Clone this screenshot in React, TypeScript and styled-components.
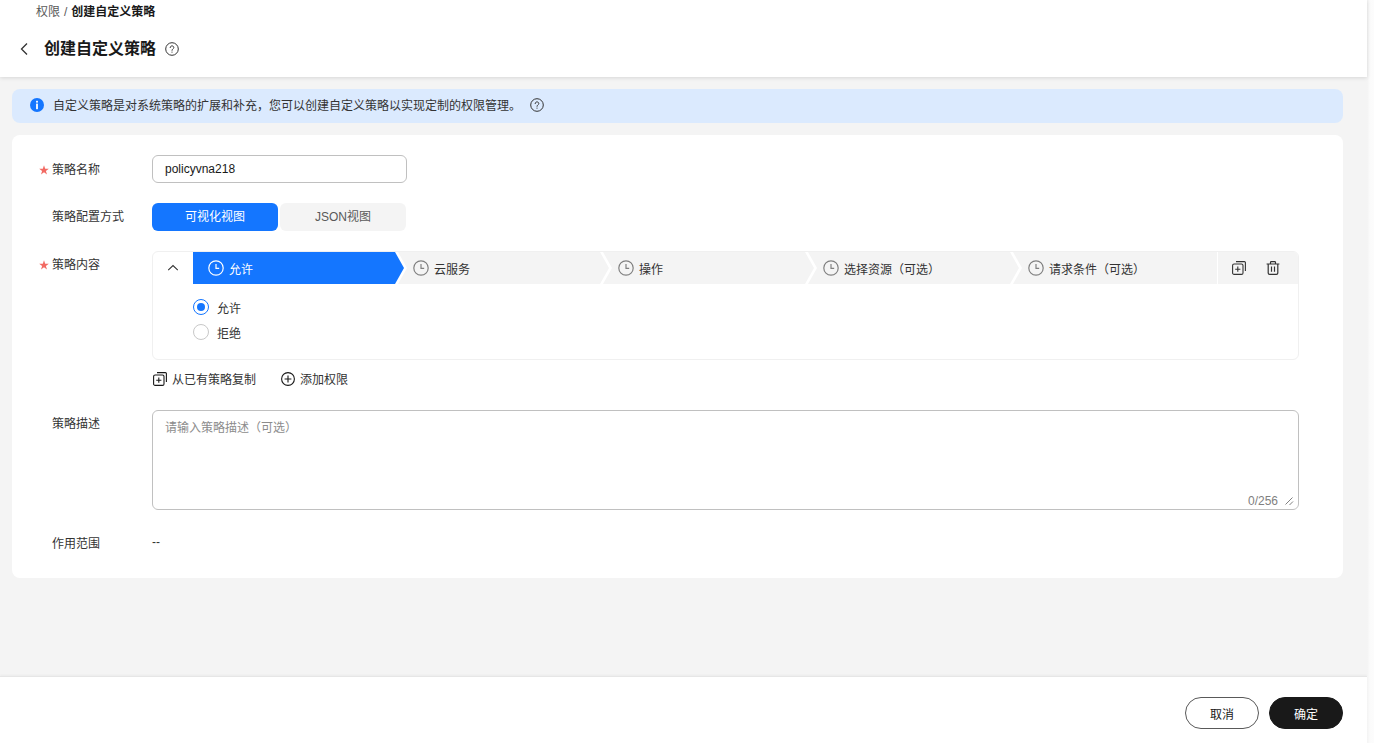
import React from "react";
import styled, { createGlobalStyle } from "styled-components";

const Global = createGlobalStyle`
  html, body { margin: 0; padding: 0; background: #fff; }
  body { font-family: "Liberation Sans", "Noto Sans CJK SC", sans-serif; font-size: 12px; color: #191919; }
  * { box-sizing: border-box; }
`;

const Shell = styled.div`
  display: flex;
  width: 1374px;
  height: 743px;
  overflow: hidden;
`;
const Main = styled.div`
  width: 1367px;
  display: flex;
  flex-direction: column;
  background: #f4f4f4;
`;
const Rail = styled.div`
  width: 7px;
  background: linear-gradient(to right, #f3f3f3 0, #fbfbfb 3px, #fcfcfc 100%);
`;
const Header = styled.header`
  height: 77px;
  background: #fff;
  box-shadow: 0 1px 4px rgba(0, 0, 0, 0.12);
  padding: 4px 0 0 18px;
  position: relative;
`;
const Crumbs = styled.div`
  display: flex;
  gap: 4px;
  height: 16px;
  line-height: 16px;
  padding-left: 18px;
  color: #595959;
`;
const CrumbNow = styled.span`
  color: #191919;
  font-weight: 700;
`;
const TitleRow = styled.div`
  display: flex;
  align-items: center;
  margin-top: 17px;
  height: 24px;
`;
const BackButton = styled.span`
  display: flex;
  width: 26px;
  color: #333;
`;
const Title = styled.h1`
  margin: 0 9px 0 0;
  font-size: 16px;
  font-weight: 700;
  line-height: 24px;
`;
const Content = styled.main`
  flex: 1;
  padding: 12px 24px 0 12px;
`;
const Banner = styled.div`
  display: flex;
  align-items: center;
  height: 34px;
  padding: 0 0 2px 18px;
  background: #dbeafe;
  border-radius: 8px;
  color: #333;
`;
const BannerText = styled.span`
  margin: 0 9px 0 9px;
  padding-top: 2px;
  line-height: 16px;
`;
const Card = styled.section`
  margin-top: 12px;
  height: 443px;
  background: #fff;
  border-radius: 8px;
  padding: 20px 44px 0 0;
`;
const Row = styled.div<{ $mb: number }>`
  display: flex;
  margin-bottom: ${(p) => p.$mb}px;
`;
const Label = styled.label<{ $top: number }>`
  width: 140px;
  flex: none;
  padding: ${(p) => p.$top}px 0 0 28px;
  line-height: 16px;
  color: #333;
  display: flex;
  align-items: flex-start;
`;
const Star = styled.span`
  width: 12px;
  height: 16px;
  flex: none;
  display: flex;
  align-items: center;
  svg { margin-left: -1px; }
`;
const TextInput = styled.div`
  width: 255px;
  height: 28px;
  padding: 0 12px;
  border: 1px solid #c0c0c0;
  border-radius: 6px;
  line-height: 26px;
  color: #191919;
`;
const Segments = styled.div`
  display: flex;
  gap: 2px;
`;
const Segment = styled.div<{ $active?: boolean }>`
  width: 126px;
  height: 28px;
  border-radius: 6px;
  background: ${(p) => (p.$active ? "#1476ff" : "#f4f4f4")};
  color: ${(p) => (p.$active ? "#fff" : "#595959")};
  line-height: 28px;
  text-align: center;
`;
const Field = styled.div`
  flex: 1;
  min-width: 0;
`;
const Policy = styled.div`
  height: 109px;
  border: 1px solid #f0f0f0;
  border-radius: 6px;
  overflow: hidden;
`;
const StepBar = styled.div`
  display: flex;
  height: 32px;
`;
const Collapse = styled.span`
  width: 40px;
  flex: none;
  display: flex;
  align-items: center;
  justify-content: center;
  color: #333;
`;
const Steps = styled.div`
  display: flex;
  width: 1023px;
  flex: none;
`;
const Step = styled.div<{ $active?: boolean; $first?: boolean; $last?: boolean }>`
  flex: none;
  width: ${(p) => (p.$last ? 204 : 211)}px;
  margin-left: ${(p) => (p.$first ? 0 : -6)}px;
  padding-left: 15px;
  height: 32px;
  display: flex;
  align-items: center;
  gap: 5px;
  background: ${(p) => (p.$active ? "#1476ff" : "#f4f4f4")};
  color: ${(p) => (p.$active ? "#fff" : "#333")};
  clip-path: ${(p) =>
    p.$first
      ? "polygon(0 0, calc(100% - 9px) 0, 100% 50%, calc(100% - 9px) 100%, 0 100%)"
      : p.$last
      ? "polygon(0 0, 100% 0, 100% 100%, 0 100%, 9px 50%)"
      : "polygon(0 0, calc(100% - 9px) 0, 100% 50%, calc(100% - 9px) 100%, 0 100%, 9px 50%)"};
  svg { flex: none; color: ${(p) => (p.$active ? "#fff" : "#808080")}; }
`;
const Actions = styled.div`
  flex: 1;
  margin-left: 2px;
  background: #f4f4f4;
  display: flex;
  align-items: center;
  gap: 20px;
  padding-left: 14px;
  color: #333;
`;
const RadioList = styled.div`
  padding: 15px 0 0 40px;
  display: flex;
  flex-direction: column;
  gap: 9px;
`;
const RadioRow = styled.div`
  display: flex;
  align-items: center;
  height: 16px;
  gap: 8px;
  color: #333;
`;
const Radio = styled.span<{ $checked?: boolean }>`
  width: 16px;
  height: 16px;
  border-radius: 50%;
  border: 1px solid ${(p) => (p.$checked ? "#1476ff" : "#c8c8c8")};
  display: flex;
  align-items: center;
  justify-content: center;
  &::after {
    content: "";
    width: 8px;
    height: 8px;
    border-radius: 50%;
    background: ${(p) => (p.$checked ? "#1476ff" : "transparent")};
  }
`;
const LinkRow = styled.div`
  display: flex;
  align-items: center;
  height: 16px;
  margin-top: 11px;
  padding-left: 1px;
  gap: 25px;
  color: #333;
`;
const LinkItem = styled.span`
  display: flex;
  align-items: center;
  gap: 5px;
  svg { color: #191919; flex: none; }
`;
const LinkText = styled.span`
  line-height: 16px;
  padding-top: 2px;
`;
const TextArea = styled.div`
  position: relative;
  height: 100px;
  margin-top: -1px;
  border: 1px solid #c0c0c0;
  border-radius: 6px;
  padding: 9px 12px;
  line-height: 16px;
  color: #8c8c8c;
`;
const Counter = styled.span`
  position: absolute;
  right: 20px;
  bottom: 1px;
  line-height: 14px;
  color: #808080;
`;
const Grip = styled.span`
  position: absolute;
  right: 4px;
  bottom: 3px;
  display: flex;
  color: #808080;
`;
const Plain = styled.div`
  line-height: 16px;
  color: #333;
`;
const Footer = styled.footer`
  height: 67px;
  background: #fff;
  border-top: 1px solid #e6e6e6;
  box-shadow: 0 -1px 2px rgba(0, 0, 0, 0.04);
  display: flex;
  justify-content: flex-end;
  align-items: flex-start;
  gap: 10px;
  padding: 20px 24px 0 0;
`;
const Pill = styled.button<{ $primary?: boolean }>`
  width: 74px;
  height: 32px;
  padding: 0;
  border-radius: 16px;
  border: 1px solid ${(p) => (p.$primary ? "#191919" : "#595959")};
  background: ${(p) => (p.$primary ? "#191919" : "#fff")};
  color: ${(p) => (p.$primary ? "#fff" : "#191919")};
  font: inherit;
`;

const Help = () => (
  <svg width="14" height="14" viewBox="0 0 14 14" fill="none" stroke="#333" strokeWidth="1">
    <circle cx="7" cy="7" r="6.3" />
    <path d="M5.2 5.6c0-1 .8-1.7 1.8-1.7s1.8.7 1.8 1.6c0 1.4-1.8 1.4-1.8 2.8" strokeLinecap="round" />
    <circle cx="7" cy="10.1" r=".6" fill="#333" stroke="none" />
  </svg>
);
const Back = () => (
  <svg width="12" height="14" viewBox="0 0 12 14" fill="none" stroke="currentColor" strokeWidth="1.3">
    <path d="M9 1.5 3.5 7 9 12.5" />
  </svg>
);
const Info = () => (
  <svg width="14" height="14" viewBox="0 0 14 14">
    <circle cx="7" cy="7" r="7" fill="#1476ff" />
    <rect x="6.1" y="2.8" width="1.8" height="1.8" fill="#fff" />
    <rect x="6.1" y="5.6" width="1.8" height="5.6" fill="#fff" />
  </svg>
);
const RequiredStar = () => (
  <svg width="10" height="10" viewBox="0 0 10 10">
    <path d="M5 .3 6.2 3.7H9.8L6.9 5.9 8 9.5 5 7.3 2 9.5 3.1 5.9.2 3.7H3.8Z" fill="#f26a63" />
  </svg>
);
const Clock = () => (
  <svg width="16" height="16" viewBox="0 0 16 16" fill="none" stroke="currentColor" strokeWidth="1.2">
    <circle cx="8" cy="8" r="7.2" />
    <path d="M8 4v4.3h3.2" />
  </svg>
);
const Up = () => (
  <svg width="12" height="12" viewBox="0 0 12 12" fill="none" stroke="currentColor" strokeWidth="1.1">
    <path d="M1.2 8.2 6 3.6l4.8 4.6" />
  </svg>
);
const CopyAdd = () => (
  <svg width="14" height="14" viewBox="0 0 14 14" fill="none" stroke="currentColor" strokeWidth="1.1">
    <rect x=".6" y="3" width="10.4" height="10.4" rx="1.5" />
    <path d="M4 .6h8.4a1 1 0 0 1 1 1V10M5.8 5.6v5.2M3.2 8.2h5.2" />
  </svg>
);
const Trash = () => (
  <svg width="14" height="14" viewBox="0 0 14 14" fill="none" stroke="currentColor" strokeWidth="1.2">
    <path d="M.6 3h12.8M4.5 3V1.4c0-.4.3-.8.8-.8h3.4c.5 0 .8.4.8.8V3M2.2 3v9c0 .8.6 1.4 1.4 1.4h6.8c.8 0 1.4-.6 1.4-1.4V3M5.5 5.5v5.2M8.5 5.5v5.2" />
  </svg>
);
const PlusCircle = () => (
  <svg width="14" height="14" viewBox="0 0 14 14" fill="none" stroke="currentColor" strokeWidth="1.1">
    <circle cx="7" cy="7" r="6.4" />
    <path d="M7 3.6v6.8M3.6 7h6.8" />
  </svg>
);
const Resize = () => (
  <svg width="9" height="9" viewBox="0 0 9 9" fill="none" stroke="currentColor" strokeWidth="1">
    <path d="M.5 7.5 7.5.5M4.5 8 8 4.5" />
  </svg>
);

const stepNames = ["允许", "云服务", "操作", "选择资源（可选）", "请求条件（可选）"];

export default function App() {
  return (
    <Shell>
      <Global />
      <Main>
        <Header>
          <Crumbs>
            <span>权限</span>
            <span>/</span>
            <CrumbNow>创建自定义策略</CrumbNow>
          </Crumbs>
          <TitleRow>
            <BackButton><Back /></BackButton>
            <Title>创建自定义策略</Title>
            <Help />
          </TitleRow>
        </Header>
        <Content>
          <Banner>
            <Info />
            <BannerText>自定义策略是对系统策略的扩展和补充，您可以创建自定义策略以实现定制的权限管理。</BannerText>
            <Help />
          </Banner>
          <Card>
            <Row $mb={20}>
              <Label $top={7}><Star><RequiredStar /></Star>策略名称</Label>
              <TextInput>policyvna218</TextInput>
            </Row>
            <Row $mb={20}>
              <Label $top={6}><Star />策略配置方式</Label>
              <Segments>
                <Segment $active>可视化视图</Segment>
                <Segment>JSON视图</Segment>
              </Segments>
            </Row>
            <Row $mb={24}>
              <Label $top={6}><Star><RequiredStar /></Star>策略内容</Label>
              <Field>
                <Policy>
                  <StepBar>
                    <Collapse><Up /></Collapse>
                    <Steps>
                      {stepNames.map((name, i) => (
                        <Step key={name} $active={i === 0} $first={i === 0} $last={i === 4}>
                          <Clock />
                          <span>{name}</span>
                        </Step>
                      ))}
                    </Steps>
                    <Actions>
                      <CopyAdd />
                      <Trash />
                    </Actions>
                  </StepBar>
                  <RadioList>
                    <RadioRow><Radio $checked />允许</RadioRow>
                    <RadioRow><Radio />拒绝</RadioRow>
                  </RadioList>
                </Policy>
                <LinkRow>
                  <LinkItem><CopyAdd /><LinkText>从已有策略复制</LinkText></LinkItem>
                  <LinkItem><PlusCircle /><LinkText>添加权限</LinkText></LinkItem>
                </LinkRow>
              </Field>
            </Row>
            <Row $mb={24}>
              <Label $top={5}><Star />策略描述</Label>
              <Field>
                <TextArea>
                  请输入策略描述（可选）
                  <Counter>0/256</Counter>
                  <Grip><Resize /></Grip>
                </TextArea>
              </Field>
            </Row>
            <Row $mb={0}>
              <Label $top={2}><Star />作用范围</Label>
              <Plain>--</Plain>
            </Row>
          </Card>
        </Content>
        <Footer>
          <Pill>取消</Pill>
          <Pill $primary>确定</Pill>
        </Footer>
      </Main>
      <Rail />
    </Shell>
  );
}
